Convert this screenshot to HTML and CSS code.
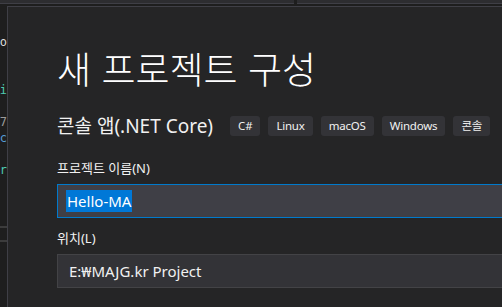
FILE: index.html
```html
<!DOCTYPE html>
<html lang="ko">

<head>
    <meta charset="UTF-8">
    <meta name="viewport" content="width=device-width, initial-scale=1.0">
    <title>새 프로젝트 구성</title>
    <link rel="stylesheet" href="styles.css">
</head>

<body>
    <div class="topbar">
        <div class="tab-strip left"></div>
        <div class="tab-strip right"></div>
    </div>

    <div class="main">
        <div class="gutter">
            <div class="code-line"></div>
            <div class="code-line plain">Hello</div>
            <div class="code-line"></div>
            <div class="code-line"></div>
            <div class="code-line type">using System.Collecti</div>
            <div class="code-line"></div>
            <div class="code-line dim">2021.07</div>
            <div class="code-line key">static</div>
            <div class="code-line"></div>
            <div class="code-line type">Color</div>
            <div class="code-line"></div>
            <div class="code-line"></div>
            <div class="code-line"></div>
            <div class="gutter-rule first"></div>
            <div class="gutter-rule"></div>
        </div>

        <div class="dialog">
            <h1 class="title">새 프로젝트 구성</h1>

            <div class="template">
                <h2>콘솔 앱(.NET Core)</h2>
                <div class="tags">
                    <span class="tag">C#</span>
                    <span class="tag">Linux</span>
                    <span class="tag">macOS</span>
                    <span class="tag">Windows</span>
                    <span class="tag">콘솔</span>
                </div>
            </div>

            <label class="field-label">프로젝트 이름(N)</label>
            <div class="field focused">
                <span class="selected">Hello-MA</span>
            </div>

            <label class="field-label">위치(L)</label>
            <div class="field">
                <span class="value">E:₩MAJG.kr Project</span>
            </div>
        </div>
    </div>
</body>

</html>
```

FILE: styles.css
```css
body {
    margin: 0;
    height: 307px;
    overflow: hidden;
    background-color: #1e1e1e;
    font-family: "Noto Sans", "Noto Sans CJK KR", sans-serif;
    color: #f1f1f1;
}

.topbar {
    height: 6px;
    display: flex;
    gap: 3px;
    background-color: #1e1e1e;
}

.tab-strip {
    height: 3px;
    border-bottom: 1px solid #3f3f46;
    background-color: #2d2d30;
}

.tab-strip.left {
    width: 294px;
}

.tab-strip.right {
    flex: 1;
}

.main {
    display: flex;
    height: 301px;
}

.gutter {
    width: 7px;
    flex-shrink: 0;
    padding-top: 12px;
    overflow: hidden;
    background-color: #1e1e1e;
    font-family: "DejaVu Sans Mono", monospace;
    font-size: 12px;
}

.code-line {
    height: 16px;
    line-height: 16px;
    display: flex;
    justify-content: flex-end;
    white-space: nowrap;
}

.plain {
    color: #dcdcdc;
}

.type {
    color: #4ec9b0;
}

.dim {
    color: #9b9b9b;
}

.key {
    color: #569cd6;
}

.gutter-rule {
    height: 2px;
    margin-top: 12px;
    background-color: #3c3c3c;
}

.gutter-rule.first {
    margin-top: 0;
}

.dialog {
    flex: 1;
    min-width: 0;
    border-top: 1px solid #3f3f46;
    border-left: 1px solid #3f3f46;
    background-color: #252526;
    padding: 36px 0 0 49px;
}

.title {
    margin: 0;
    font-family: "Noto Sans CJK KR", sans-serif;
    font-weight: 300;
    font-size: 37px;
    line-height: 50px;
    color: #ffffff;
    white-space: nowrap;
}

.template {
    display: flex;
    align-items: center;
    gap: 17px;
    margin-top: 20px;
    white-space: nowrap;
}

.template h2 {
    margin: 0;
    flex-shrink: 0;
    font-family: "Noto Sans", "Noto Sans CJK KR", sans-serif;
    font-weight: 400;
    font-size: 19px;
    line-height: 26px;
    color: #f1f1f1;
}

.tags {
    display: flex;
    gap: 8px;
}

.tag {
    flex-shrink: 0;
    height: 20px;
    line-height: 20px;
    padding: 0 8px;
    border-radius: 3px;
    background-color: #333337;
    font-size: 11.5px;
    letter-spacing: -0.2px;
    color: #f1f1f1;
}

.field-label {
    display: block;
    margin-top: 20px;
    font-size: 13px;
    line-height: 18px;
    color: #f1f1f1;
}

.field {
    height: 32px;
    margin-top: 7px;
    padding-left: 11px;
    display: flex;
    align-items: center;
    border: 1px solid #434346;
    border-right: none;
    background-color: #333337;
    font-size: 15px;
    white-space: nowrap;
}

.field + .field-label {
    margin-top: 11px;
}

.field.focused {
    padding-left: 8px;
    border-color: #007acc;
    background-color: #3f3f46;
}

.selected {
    padding: 0 1px;
    line-height: 22px;
    background-color: #0078d7;
    color: #ffffff;
}

.value {
    color: #f1f1f1;
}
```
